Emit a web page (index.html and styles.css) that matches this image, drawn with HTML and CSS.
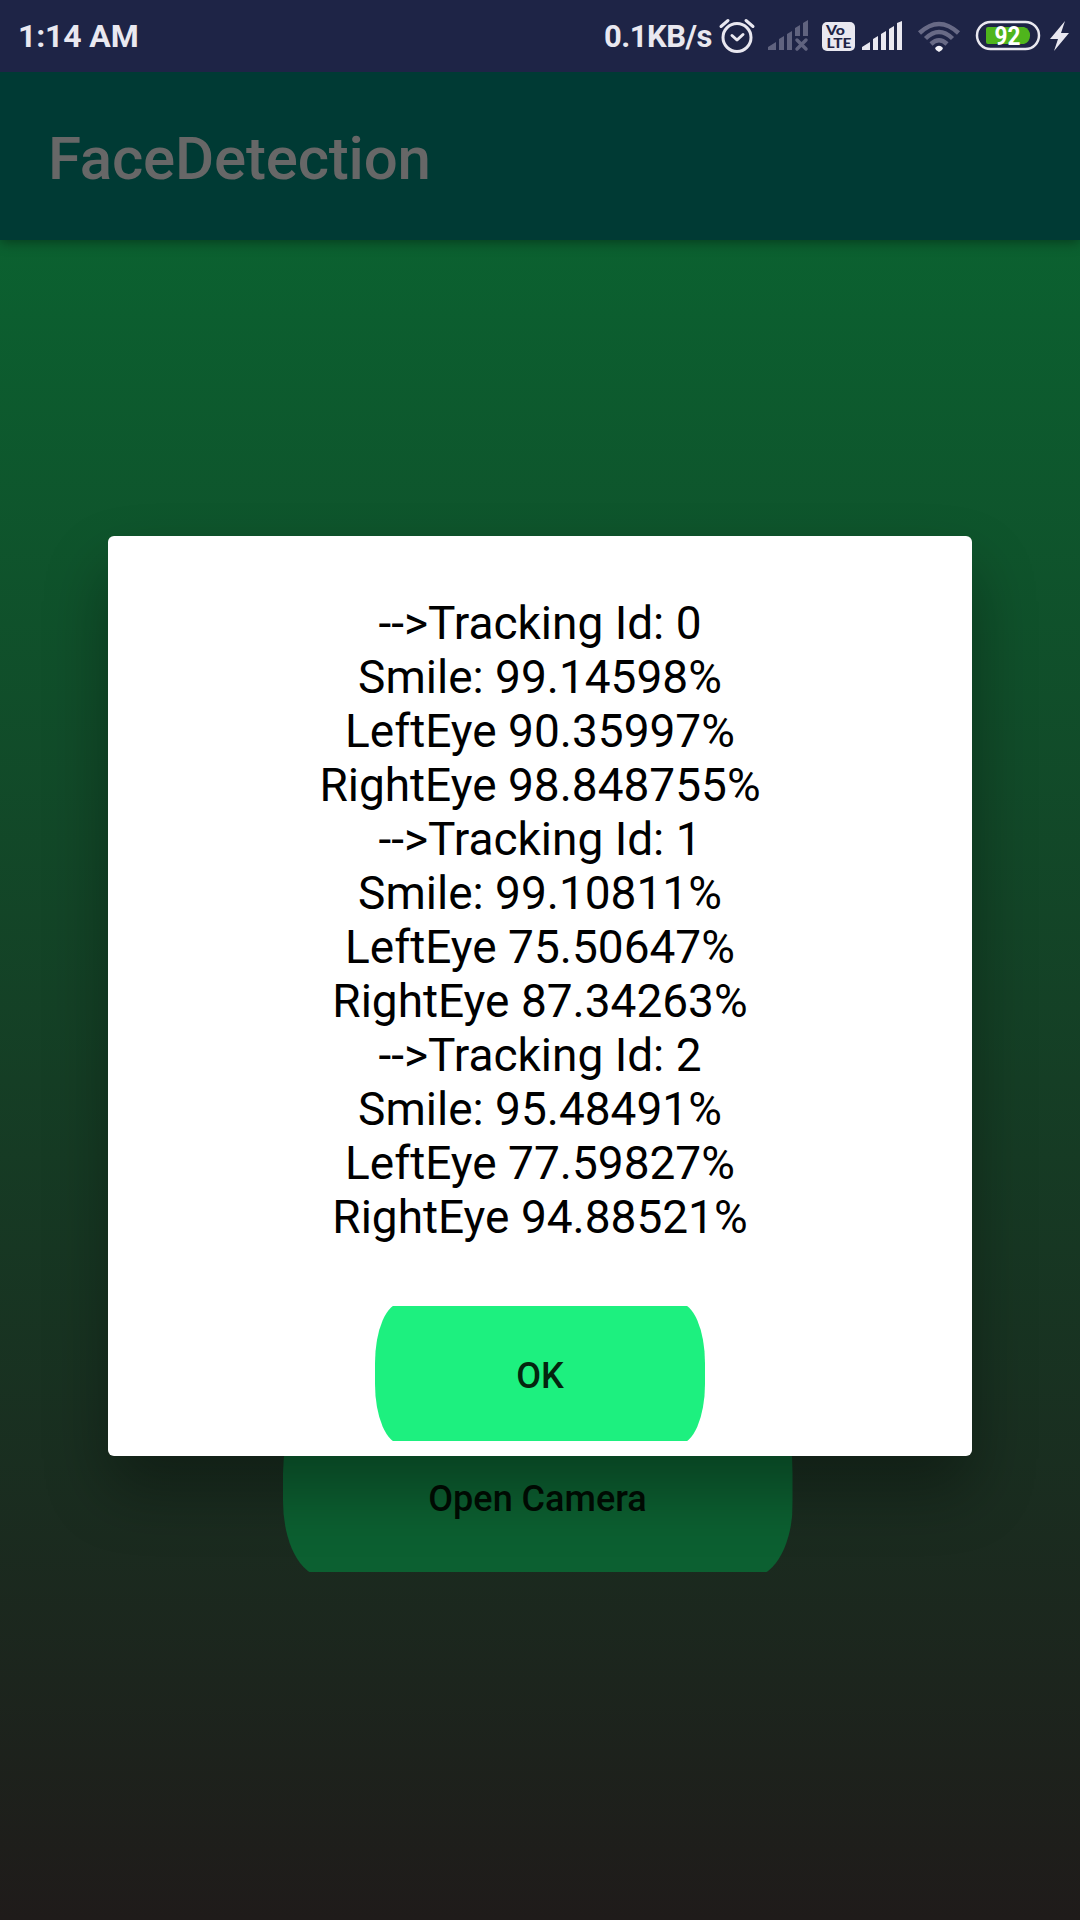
FILE: index.html
```html
<!DOCTYPE html>
<html lang="en">
<head>
<meta charset="utf-8">
<title>FaceDetection</title>
<link rel="stylesheet" href="styles.css">
</head>
<body>
<div class="screen">
  <div class="status-bar">
    <span class="clock">1:14 AM</span>
    <span class="speed">0.1KB/s</span>
    <svg class="icons" width="368" height="72" viewBox="712 0 368 72">
      <g fill="none" stroke="#e9e8f0" stroke-width="3" stroke-linecap="round" stroke-linejoin="round">
        <circle cx="737" cy="37.500" r="14"/>
        <path d="M732 35.500l5 4.500 6-5.500"/>
        <path d="M721 26.500l7-6M753 26.500l-7-6"/>
      </g>
      <g fill="#60637f">
        <path d="M768 50v-3l8-5v8zM779 50V39l5-3v14zM787 50V34l5-3v19zM795 36v-8l5-3v11zM803 36V23l5-3v16z"/>
        <path d="M797 40l9 9M806 40l-9 9" stroke="#60637f" stroke-width="3.500" stroke-linecap="round"/>
      </g>
      <rect x="822" y="22" width="33" height="29" rx="5" fill="#e9e8f0"/>
      <g class="volte" fill="#1e2446">
        <text x="826" y="34.500" textLength="19" lengthAdjust="spacingAndGlyphs">Vo</text>
        <text x="826.500" y="47.500" textLength="25" lengthAdjust="spacingAndGlyphs">LTE</text>
      </g>
      <path fill="#e9e8f0" d="M862 50v-3l8-5v8zM873 50V39l5-3v14zM881 50V34l5-3v19zM889 50V29l5-3v24zM897 50V23l5-2v29z"/>
      <g fill="none" stroke="#686a86" stroke-width="4.500">
        <path d="M919.500 33q19.500-18 39 0"/>
        <path d="M925.500 38.500q13.500-13 27 0"/>
        <path d="M931 44q8-7.500 16 0"/>
      </g>
      <path fill="#f4f3f8" d="M935 48q4-4.500 8 0l-1 2-3 2-3-2z"/>
      <rect x="977" y="22" width="62" height="27" rx="13.500" fill="none" stroke="#e9e8f0" stroke-width="2.500"/>
      <path fill="#4fb51c" d="M988 27h36a9 9 0 0 1 0 17h-36a2 2 0 0 1-2-2V29a2 2 0 0 1 2-2z"/>
      <text class="charge" x="994.500" y="44.500" textLength="26" lengthAdjust="spacingAndGlyphs" fill="#fff">92</text>
      <path fill="#e9e8f0" d="M1065 21l-15 18h8l-4 12 15-18h-8z"/>
    </svg>
  </div>
  <header class="app-bar">FaceDetection</header>
  <main class="content">
    <section class="dialog">
      <p class="result">--&gt;Tracking Id: 0<br>Smile: 99.14598%<br>LeftEye 90.35997%<br>RightEye 98.848755%<br>--&gt;Tracking Id: 1<br>Smile: 99.10811%<br>LeftEye 75.50647%<br>RightEye 87.34263%<br>--&gt;Tracking Id: 2<br>Smile: 95.48491%<br>LeftEye 77.59827%<br>RightEye 94.88521%</p>
      <button class="ok">OK</button>
    </section>
    <button class="camera">Open Camera</button>
  </main>
</div>
</body>
</html>
```
FILE: styles.css
```css
* { box-sizing: border-box; }
body { margin: 0; font-family: Roboto, sans-serif; }
.screen { width: 1080px; height: 1920px; display: flex; flex-direction: column; overflow: hidden; }
.status-bar { height: 72px; flex: none; display: flex; align-items: center; background: #1e2446; color: #e9e8f0; font-weight: 700; }
.clock { font-size: 32px; letter-spacing: -.15px; padding: 0 0 0 18px; }
.speed { font-size: 31px; letter-spacing: -.5px; padding-top: 1px; margin-left: auto; }
.icons { flex: none; }
.volte { font: 900 13.5px Lato, sans-serif; }
.charge { font: 700 26px Roboto, sans-serif; }
.app-bar { height: 168px; flex: none; padding: 5px 0 0 48px; display: flex; align-items: center; background: #003a34; color: #676767; font-size: 60px; letter-spacing: -.2px; font-weight: 500; box-shadow: 0 2px 12px rgba(0,0,0,.4); clip-path: inset(0 0 -20px); position: relative; }
.content { flex: 1; display: flex; flex-direction: column; align-items: center; padding-top: 296px; background: linear-gradient(#0b6130, #1f1b1a); }
.dialog { position: relative; z-index: 1; width: 864px; height: 920px; flex: none; display: flex; flex-direction: column; align-items: center; padding-top: 60px; background: #fff; border-radius: 6px; box-shadow: 0 34px 64px rgba(0,0,0,.33); }
.result { margin: 0; height: 707px; font-size: 46px; line-height: 54px; text-align: center; color: #000; }
button { border: 0; padding: 0; font-family: inherit; font-size: 36px; font-weight: 500; }
/* The side curves are cut flat where they meet the top and bottom edges. */
.ok { width: 330px; height: 141px; padding-top: 4px; background: #1df07f; color: #04250f; border-radius: 26px / 60px; clip-path: inset(3px 0); }
.camera { width: 510px; height: 178px; margin: -58px 5px 0 0; padding-top: 24px; background: #0c6031; color: #010c03; border-radius: 39px / 75px; clip-path: inset(4px 0); }
```
